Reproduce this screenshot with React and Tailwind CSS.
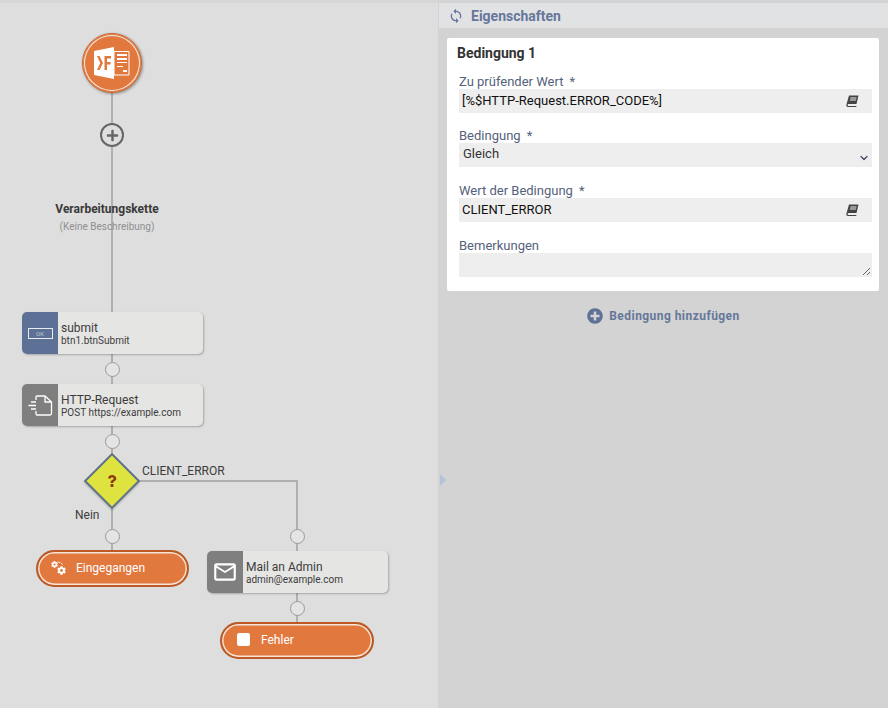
import React from "react";
import { FaCog, FaPlus, FaPlusCircle, FaQuestion } from "react-icons/fa";
import { MdMailOutline, MdSync } from "react-icons/md";
import { ChevronDown } from "lucide-react";

function Dot({ className }) {
  return <div className={`absolute w-[15px] h-[15px] rounded-full bg-[#e4e4e4] border border-[#9b9b9b] ${className}`} />;
}

function Node({ className, iconBg, icon, title, sub }) {
  return (
    <div className={`absolute w-[181px] h-[42px] flex rounded-[5px] bg-[#e5e5e3] shadow-[1px_1px_2px_rgba(0,0,0,0.25)] overflow-hidden ${className}`}>
      <div className={`w-[36px] flex items-center justify-center ${iconBg}`}>{icon}</div>
      <div className="pl-[3px] pt-[9px] text-[#3c3c3c] whitespace-nowrap">
        <div className="text-[12px] leading-[14px]">{title}</div>
        <div className="text-[10px] leading-[11px]">{sub}</div>
      </div>
    </div>
  );
}

function Pill({ className, icon, label }) {
  return (
    <div className={`absolute h-[37px] rounded-full bg-[#e1793f] border-[2px] border-[#bb5a24] shadow-[inset_0_0_0_1.5px_#f5e6dc] flex items-center pb-[2px] text-white text-[12px] ${className}`}>
      {icon}
      {label}
    </div>
  );
}

function BookIcon() {
  return (
    <svg width="13" height="12" viewBox="0 0 13 12">
      <path d="M3 0.5 H12.5 L10.5 9 H2.5 Q1.6 9 1.6 10 T2.5 11 H10.5 L10.2 12 H2 Q0 12 0.3 10 Z" fill="#444" />
      <path d="M4.6 2.4 H10.6 L10.3 3.6 H4.3 Z M4 4.6 H10 L9.8 5.6 H3.8 Z" fill="#eee" />
    </svg>
  );
}

function GearsIcon() {
  return (
    <div className="relative w-[15px] h-[14px] mr-[10px]">
      <FaCog className="absolute left-0 top-0 text-white text-[7px]" />
      <FaCog className="absolute right-0 bottom-0 text-white text-[9px]" />
      <svg className="absolute left-0 top-0" width="15" height="14" viewBox="0 0 15 14" fill="none" stroke="#fff" strokeWidth="0.7">
        <path d="M6 1 Q10 0.5 12 4" />
      </svg>
    </div>
  );
}

function Field({ label, required, children, className }) {
  return (
    <div className={className}>
      <div className="text-[13px] leading-[15px] text-[#55627c] h-[15px] whitespace-nowrap">
        {label}
        {required && <span className="ml-[6px]">*</span>}
      </div>
      <div className="h-[24px] bg-[#eeeeee] flex items-center justify-between pl-[3px] pr-[13px] text-[13px] text-[#222] relative">
        {children}
      </div>
    </div>
  );
}

function Canvas() {
  return (
    <div className="relative w-[438px] h-[708px] bg-[#dedede] overflow-hidden">
      <div className="absolute left-0 top-0 w-full h-[3px] bg-[#d6d6d6]" />

      {/* Verbindungen */}
      <div className="absolute left-[111px] top-[90px] w-[2px] h-[222px] bg-[#b0b0b0]" />
      <div className="absolute left-[111px] top-[354px] w-[2px] h-[30px] bg-[#b0b0b0]" />
      <div className="absolute left-[111px] top-[426px] w-[2px] h-[30px] bg-[#b0b0b0]" />
      <div className="absolute left-[111px] top-[505px] w-[2px] h-[45px] bg-[#b0b0b0]" />
      <div className="absolute left-[137px] top-[480px] w-[161px] h-[2px] bg-[#b0b0b0]" />
      <div className="absolute left-[296px] top-[480px] w-[2px] h-[71px] bg-[#b0b0b0]" />
      <div className="absolute left-[296px] top-[593px] w-[2px] h-[30px] bg-[#b0b0b0]" />

      {/* Start */}
      <div className="absolute left-[82px] top-[33px] w-[60px] h-[60px] rounded-full bg-[#e1793f] border border-[#c96a35] shadow-[inset_0_0_0_1px_#e1793f,inset_0_0_0_2px_#f7e9df,1px_1px_3px_rgba(0,0,0,0.35)] flex items-center justify-center">
        <svg width="36" height="32" viewBox="0 0 36 32">
          <path d="M0 4 L20 0 V32 L0 28 Z" fill="#fff" />
          <path d="M3 9 H5.5 L9 16 L5.5 23 H3 L6.3 16 Z M10.5 9 H17 V11.5 H13 V15 H16.5 V17.5 H13 V23 H10.5 Z" fill="#e1793f" />
          <path d="M20 4.5 H35 V28 H20 Z" fill="none" stroke="#fff" strokeWidth="1" />
          <path d="M23 7 H33 V9 H23 Z M23 11 H33 V13 H23 Z M23 15 H33 V16 H23 Z M23 19 H29 V20 H23 Z M29 23 H33 V25 H29 Z" fill="#fff" />
        </svg>
      </div>

      {/* Plus */}
      <div className="absolute left-[100px] top-[123px] w-[24px] h-[24px] rounded-full bg-[#dedede] border-[2px] border-[#666] flex items-center justify-center">
        <FaPlus className="text-[#666] text-[13px]" />
      </div>

      <div className="absolute left-[7px] top-[201px] w-[200px] text-center text-[12px] leading-[16px] font-bold text-[#3a3a3a]">Verarbeitungskette</div>
      <div className="absolute left-[7px] top-[220px] w-[200px] text-center text-[10px] leading-[14px] text-[#8f8f8f]">(Keine Beschreibung)</div>

      <Node
        className="left-[22px] top-[312px]"
        iconBg="bg-[#5d7095]"
        title="submit"
        sub="btn1.btnSubmit"
        icon={
          <div className="w-[25px] h-[11px] border border-[#e8ebf0] text-[6px] leading-[9px] text-center text-[#c5ccda]">OK</div>
        }
      />
      <Dot className="left-[105px] top-[362px]" />
      <Node
        className="left-[22px] top-[384px]"
        iconBg="bg-[#7f7f7f]"
        title="HTTP-Request"
        sub="POST https://example.com"
        icon={
          <svg width="25" height="21" viewBox="0 0 25 21" fill="none" stroke="#fff" strokeWidth="1.3">
            <path d="M8 5 V2 Q8 1 9 1 H17 L23.5 7 V18.5 Q23.5 20 22 20 H9 Q8 20 8 19 V16" />
            <path d="M17 1 V7 H23.5" />
            <path d="M3 7 H8 M0.5 10.5 H8 M3 14 H8" />
          </svg>
        }
      />
      <Dot className="left-[105px] top-[434px]" />

      {/* Entscheidung */}
      <div className="absolute left-[92px] top-[461px] w-[40px] h-[40px] rotate-45 bg-[#dfe340] border-[2px] border-[#5d7095] shadow-[1px_1px_2px_rgba(0,0,0,0.2)]" />
      <div className="absolute left-[104px] top-[473px] w-[16px] h-[16px] flex items-center justify-center">
        <FaQuestion className="text-[#8f3b0c] text-[12px]" />
      </div>
      <div className="absolute left-[142px] top-[464px] text-[12px] leading-[14px] text-[#3c3c3c]">CLIENT_ERROR</div>
      <div className="absolute left-[75px] top-[508px] text-[12px] leading-[14px] text-[#3c3c3c]">Nein</div>
      <Dot className="left-[105px] top-[529px]" />
      <Dot className="left-[290px] top-[529px]" />

      <Pill className="left-[36px] top-[550px] w-[153px] pl-[13px]" label="Eingegangen" icon={<GearsIcon />} />

      <Node
        className="left-[207px] top-[551px]"
        iconBg="bg-[#7f7f7f]"
        title="Mail an Admin"
        sub="admin@example.com"
        icon={<MdMailOutline className="text-white text-[26px]" />}
      />
      <Dot className="left-[290px] top-[601px]" />

      <Pill
        className="left-[220px] top-[622px] w-[154px] pl-[15px]"
        label="Fehler"
        icon={<div className="w-[13px] h-[13px] rounded-[2px] bg-white mr-[11px]" />}
      />
    </div>
  );
}

function Properties() {
  return (
    <div className="relative flex-1 h-[708px] bg-[#d3d3d3] pl-[1px] pt-[3px]">
      <div className="h-[25px] bg-[#e1e2e4] flex items-center pl-[9px] pt-[1px] text-[14px] font-bold text-[#65779a]">
        <MdSync className="text-[#65779a] text-[16px] mr-[7px]" />
        Eigenschaften
      </div>
      <div className="ml-[8px] mr-[9px] mt-[10px] h-[253px] bg-white rounded-[2px] pt-[7px] pl-[10px] pr-[7px]">
        <div className="text-[14px] leading-[16px] font-bold text-[#333]">Bedingung 1</div>
        <Field label="Zu prüfender Wert" required className="mt-[13px] ml-[2px]">
          <span className="text-[#111]">[%$HTTP-Request.ERROR_CODE%]</span>
          <BookIcon />
        </Field>
        <Field label="Bedingung" required className="mt-[15px] ml-[2px]">
          <span className="pl-[1px] pb-[3px] text-[#333]">Gleich</span>
          <ChevronDown size={12} strokeWidth={2.5} className="text-[#3d4a63] -mr-[11px] mt-[6px]" />
        </Field>
        <Field label="Wert der Bedingung" required className="mt-[16px] ml-[2px]">
          <span className="text-[#111]">CLIENT_ERROR</span>
          <BookIcon />
        </Field>
        <Field label="Bemerkungen" className="mt-[16px] ml-[2px]">
          <svg className="absolute right-[1px] bottom-[1px]" width="9" height="9" viewBox="0 0 9 9" stroke="#666" strokeWidth="1">
            <path d="M1 8 L8 1 M5 8 L8 5" />
          </svg>
        </Field>
      </div>
      <div className="mt-[16px] flex items-center justify-center text-[12px] font-bold tracking-[0.45px] text-[#65779a]">
        <FaPlusCircle className="text-[#5d7095] text-[16px] mr-[6px]" />
        Bedingung hinzufügen
      </div>
      {/* Splitter */}
      <div className="absolute left-[2px] top-[474px] w-0 h-0 border-y-[6px] border-y-transparent border-l-[6px] border-l-[#b4c5da]" />
    </div>
  );
}

export default function App() {
  return (
    <div className="w-[888px] h-[708px] overflow-hidden bg-[#d3d3d3] font-['Roboto',sans-serif]">
      <div className="flex">
        <Canvas />
        <Properties />
      </div>
    </div>
  );
}
